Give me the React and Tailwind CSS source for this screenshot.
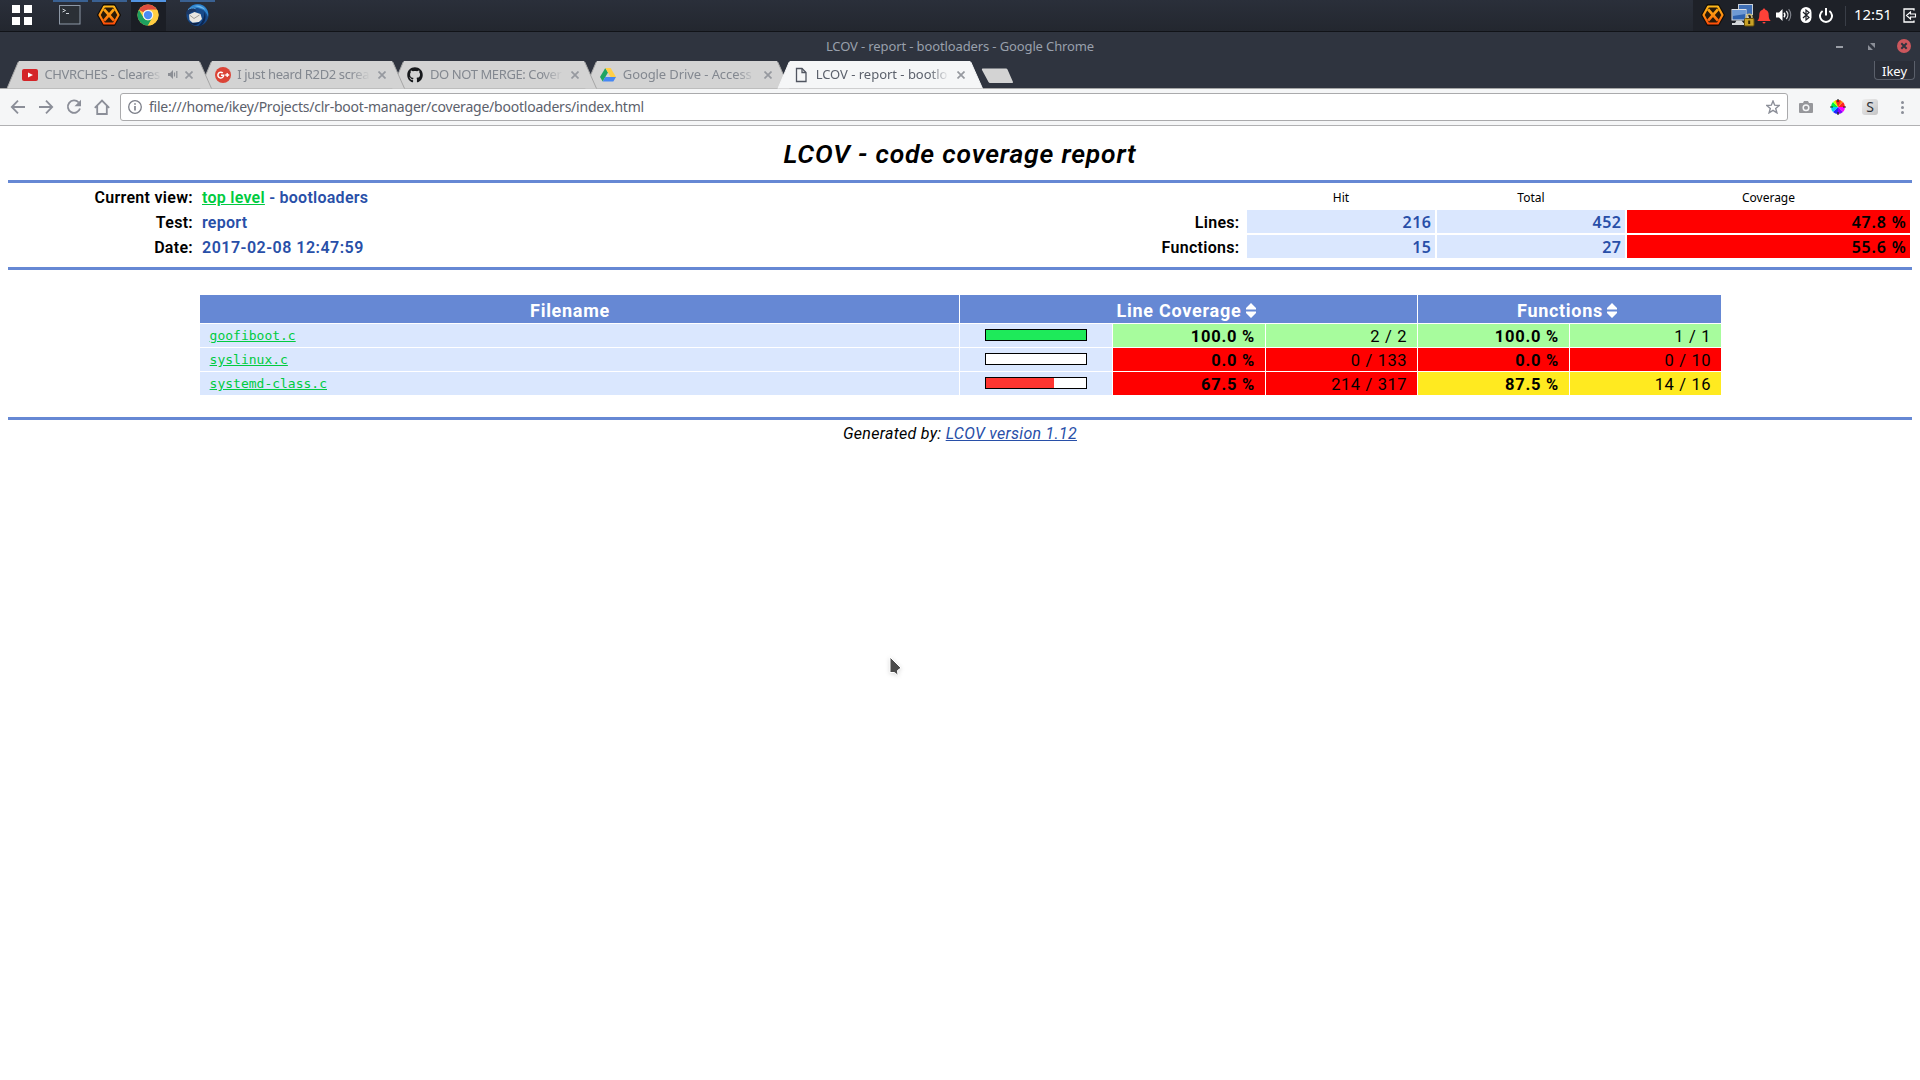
import React from "react";
import { FaGithub } from "react-icons/fa";

const UI = "font-['Noto_Sans',sans-serif]";

function OrangeX({ className }) {
  return (
    <svg viewBox="0 0 22 20" className={className}>
      <defs>
        <linearGradient id="fire" x1="0" y1="0" x2="0" y2="20" gradientUnits="userSpaceOnUse">
          <stop offset="0" stopColor="#ffc21a" />
          <stop offset="0.55" stopColor="#ff8a10" />
          <stop offset="1" stopColor="#ff3d06" />
        </linearGradient>
      </defs>
      <path d="M6.2 1h9.6l5.2 9-5.2 9H6.2L1 10z" fill="#2a1a08" stroke="#120d08" strokeWidth="2" strokeLinejoin="round" />
      <path d="M6.6 2.2h8.8l4.3 7.8-4.3 7.8H6.6L2.3 10z" fill="none" stroke="url(#fire)" strokeWidth="2" strokeLinejoin="round" />
      <path d="M6.5 4.8l9 10.4M15.5 4.8L6.500 15.200" stroke="url(#fire)" strokeWidth="2.500" />
    </svg>
  );
}

function ChromeLogo({ className }) {
  return (
    <svg viewBox="0 0 48 48" className={className}>
      <circle cx="24" cy="24" r="23" fill="#ffcd42" />
      <path d="M4.1 12.5A23 23 0 0 1 43.9 12.5H24A11.5 11.5 0 0 0 14 18.2z" fill="#de4d3f" />
      <path d="M4.1 12.5A23 23 0 0 0 24 47L34 29.7A11.5 11.5 0 0 1 14 29.7z" fill="#1da05f" />
      <path d="M43.9 12.5A23 23 0 0 1 24 47L34 29.7A11.5 11.5 0 0 0 24 12.5z" fill="#ffcd42" />
      <circle cx="24" cy="24" r="11.5" fill="#f4f4f4" />
      <circle cx="24" cy="24" r="9" fill="#4c8bf5" />
    </svg>
  );
}

function Thunderbird({ className }) {
  return (
    <svg viewBox="0 0 24 24" className={className}>
      <circle cx="12.500" cy="12" r="11" fill="#174a8a" />
      <path d="M4 5.500C7 1.500 13 0 18 2.500c4 2.500 6 7 5 11.500-1-4-3.500-7-7-8-4-1.500-8-1.500-12-.5z" fill="#2f86cf" />
      <path d="M9 3c4-1.500 9 0 11.500 4-3-2-7-3-11.500-4z" fill="#6fb6ea" />
      <path d="M19.500 9c2 5 1 10-3 13.500-1 .4-2 .5-3 .5C17.500 19 19.500 14.500 19.500 9z" fill="#0c2854" />
      <path d="M4 11.500L9.500 9l6 2 1.500 5-3 3-6.500.8L4.500 17z" fill="#e9e7e1" />
      <path d="M4.500 12l4.500 3.500 5.500-3.500" fill="none" stroke="#96938c" strokeWidth="0.9" />
      <path d="M1 10C1.500 6.500 5 4.500 9 5.500l3 3C8 8 5 9 3.500 12z" fill="#1b3763" />
      <path d="M3 6.500C5 5 8 4.500 10.500 5.500" fill="none" stroke="#58a5e0" strokeWidth="1" />
      <path d="M4 18.500c3 2 8 2 11 0-1 4-8 5-11 0z" fill="#0d2348" />
    </svg>
  );
}

function Terminal() {
  return (
    <svg viewBox="0 0 22 20" className="h-5 w-[22px]">
      <rect x="0.5" y="0.5" width="20.500" height="18.500" fill="#2b3036" stroke="#8d98a6" />
      <path d="M3.500 4l3 1.500-3 1.500" fill="none" stroke="#cdd3d8" strokeWidth="1" />
      <path d="M7 8.500h3" stroke="#cdd3d8" />
    </svg>
  );
}

function Launcher({ active, className = "", children }) {
  return (
    <div className={`flex h-[31px] w-[35px] justify-center border-t-2 ${active ? "border-[#5294e2] bg-[#1b1e25]" : "border-[#3a6192]"} ${className}`}>
      <div className="-ml-[2px]">{children}</div>
    </div>
  );
}

function NetworkIcon() {
  return (
    <svg viewBox="0 0 24 23" className="ml-[6px] h-[23px] w-6">
      <rect x="7.500" y="0.5" width="14" height="10" fill="#3f6fb5" stroke="#c9d0d8" />
      <path d="M12 11h5l1 3h-7z" fill="#d9dce0" />
      <rect x="1" y="5.500" width="14" height="10.500" fill="#2f62ad" stroke="#dde1e6" />
      <path d="M1.500 6h13v4L2 12z" fill="#6f9ad4" />
      <path d="M5.500 16.500h5l2 2.500h2v2H1v-2h3z" fill="#d4d7da" />
      <path d="M15.500 15v-2a2.700 2.700 0 0 1 5.400 0v2" fill="none" stroke="#c8b878" strokeWidth="1.600" />
      <rect x="13.500" y="14.500" width="9.500" height="7.500" rx="1" fill="#c9a227" stroke="#6b5208" />
      <path d="M18.200 16.500v3.500" stroke="#332600" strokeWidth="2" />
    </svg>
  );
}

function Panel() {
  return (
    <div className="flex h-[32px] border-b border-[#111318] bg-linear-to-b from-[#2a2f3a] to-[#23272f]">
      <div className="ml-3 mt-[5px] grid h-[20px] w-[20px] grid-cols-2 gap-[4px]">
        <span className="bg-white" />
        <span className="bg-white" />
        <span className="bg-white" />
        <span className="bg-white" />
      </div>
      <Launcher className="ml-[21px]">
        <div className="mt-[3px]"><Terminal /></div>
      </Launcher>
      <Launcher className="ml-1">
        <OrangeX className="mt-[2px] h-[22px] w-6" />
      </Launcher>
      <Launcher className="ml-1" active>
        <ChromeLogo className="mt-[2px] h-[22px] w-[22px]" />
      </Launcher>
      <Launcher className="ml-[14px]">
        <Thunderbird className="mt-[1px] h-6 w-6" />
      </Launcher>
      <div className="ml-auto flex h-[31px] w-[227px] items-center bg-[#1e2128]">
        <OrangeX className="-mt-px ml-[8px] h-[22px] w-6 shrink-0" />
        <NetworkIcon />
        <svg viewBox="0 0 14 16" className="ml-[2px] h-4 w-[14px]">
          <path d="M7 .5a1.300 1.300 0 0 1 1.300 1.300C11 2.500 11.700 4.500 11.700 7c0 3 .5 4.500 2 6H.3c1.500-1.500 2-3 2-6 0-2.500.7-4.500 3.400-5.200A1.300 1.300 0 0 1 7 .5zM5.500 14h3a1.500 1.500 0 0 1-3 0z" fill="#fc4138" />
        </svg>
        <svg viewBox="0 0 16 14" className="-mt-px ml-[5px] h-[14px] w-4">
          <path d="M0 4.500h3L6.500 1v12L3 9.500H0z" fill="#fff" />
          <path d="M8 4.800a3.500 3.500 0 0 1 0 4.400" fill="none" stroke="#fff" strokeWidth="1.400" />
          <path d="M10.300 3a6 6 0 0 1 0 8" fill="none" stroke="#d5d6d8" strokeWidth="1.300" />
          <path d="M12.600 1.200a9 9 0 0 1 0 11.600" fill="none" stroke="#7d8088" strokeWidth="1.200" />
        </svg>
        <svg viewBox="0 0 12 16" className="-mt-px ml-[8px] h-4 w-3">
          <rect x="0.500" y="0" width="11" height="16" rx="5.500" fill="#fff" />
          <path d="M3 5l6 5.500L6 13V3l3 2.500L3 11" fill="none" stroke="#1e2128" strokeWidth="1.200" />
        </svg>
        <svg viewBox="0 0 14 15" className="-mt-px ml-[7px] h-[15px] w-[14px]">
          <path d="M3.600 3A6 6 0 1 0 10.400 3M7 0v7.500" fill="none" stroke="#fff" strokeWidth="2" />
        </svg>
        <div className="ml-[12px] h-[20px] w-px bg-[#3a3e47]" />
        <div className={`${UI} ml-[8px] w-[40px] pb-[2px] text-[15px] leading-[27px] tracking-[-0.1px] text-white`}>12:51</div>
        <svg viewBox="0 0 15 15" className="-mt-px ml-[9px] h-[15px] w-[15px]">
          <path d="M11 2.500V1H1v13h10v-1.500" fill="none" stroke="#fff" strokeWidth="1.300" />
          <path d="M3.500 7.500L7.500 4v2H12.500v3H7.500v2z" fill="none" stroke="#fff" strokeWidth="1.100" />
        </svg>
      </div>
    </div>
  );
}

function TitleBar() {
  return (
    <div className="grid h-[29px] grid-cols-[1fr_auto_1fr] bg-[#2f343f]">
      <div className="col-start-2">
        <div className={`${UI} pt-px text-[13px] leading-[27px] tracking-[-0.12px] text-[#99a0ac]`}>
          LCOV - report - bootloaders - Google Chrome
        </div>
      </div>
      <div className="flex h-[28px] items-center justify-end pr-[9px]">
        <div className="mt-px h-[2px] w-[7px] bg-[#9a9ea6]" />
        <svg viewBox="0 0 7 7" className="ml-[25px] h-[7px] w-[7px]">
          <path d="M2 0h5v5zM0 2v5h5z" fill="#8b8f98" />
        </svg>
        <svg viewBox="0 0 14 14" className="ml-[22px] h-[14px] w-[14px]">
          <circle cx="7" cy="7" r="7" fill="#cc575d" />
          <path d="M4.300 4.300l5.400 5.400M9.700 4.300L4.300 9.700" stroke="#2f343f" strokeWidth="2" />
        </svg>
      </div>
    </div>
  );
}

const YouTube = (
  <svg viewBox="0 0 16 16" className="h-4 w-4">
    <rect x="0" y="2" width="16" height="12" rx="2" fill="#d42428" />
    <path d="M6 5.400l5 2.600-5 2.600z" fill="#fff" />
  </svg>
);
const GPlus = (
  <svg viewBox="0 0 16 16" className="h-4 w-4">
    <circle cx="8" cy="8" r="8" fill="#db4437" />
    <path d="M7.800 6A2.900 2.900 0 1 0 8.700 8.300H6" fill="none" stroke="#fff" strokeWidth="1.500" />
    <path d="M12.200 6v4M10.200 8h4" stroke="#fff" strokeWidth="1.300" />
  </svg>
);
const Drive = (
  <svg viewBox="0 0 16 16" className="h-4 w-4">
    <path d="M5.300 1L0 10l2.700 4.600L8 5.600z" fill="#1fa463" />
    <path d="M5.300 1h5.400L16 10h-5.400z" fill="#ffcf48" />
    <path d="M2.700 14.600L5.300 10H16l-2.700 4.600z" fill="#4687f4" />
  </svg>
);
const Page = (
  <svg viewBox="0 0 16 16" className="h-4 w-4">
    <path d="M3.500 1.500h5.500l4 4v9h-9.500z" fill="none" stroke="#505560" strokeWidth="1.300" />
    <path d="M9 1.500v4h4" fill="none" stroke="#505560" strokeWidth="1.300" />
  </svg>
);

const TABS = [
  { icon: YouTube, title: "CHVRCHES - Cleares", audio: true, track: "tracking-[-0.35px]", z: "z-40" },
  { icon: GPlus, title: "I just heard R2D2 screa", track: "tracking-[-0.38px]", z: "z-30" },
  { icon: <FaGithub className="h-4 w-4 text-[#17191c]" />, title: "DO NOT MERGE: Cover", track: "tracking-[-0.4px]", z: "z-20" },
  { icon: Drive, title: "Google Drive - Access", track: "tracking-[-0.1px]", z: "z-10" },
  { icon: Page, title: "LCOV - report - bootlo", active: true, track: "tracking-[-0.02px]", z: "z-50" },
];

function Tab({ icon, title, audio, active, track, z }) {
  return (
    <div className={`relative -mr-[11.7px] h-[28px] w-[204.5px] shrink-0 ${z}`}>
      <svg viewBox="0 0 204.5 28" className="absolute inset-0 h-full w-full overflow-visible">
        <path
          d="M0 27.500L11 1.500Q11.500 .5 12.500 .5H191.500Q192.500 .5 193 1.500L204.500 27.500"
          fill={active ? "#f5f6f7" : "#d3d3d3"}
          stroke={active ? "#f5f6f7" : "#a6a6a6"}
          strokeWidth="1"
        />
        <path d="M12 .5H192" stroke={active ? "#f5f6f7" : "#d3d3d3"} strokeWidth="1" />
      </svg>
      <div className="relative flex h-[27px] items-center pl-[15px]">
        {icon}
        <div
          className={`${UI} ml-[6.700px] overflow-hidden whitespace-nowrap text-[13px] leading-[27px] mask-r-from-85% ${track} ${
            audio ? "w-[118px]" : "w-[133px]"
          } ${active ? "text-[#5c616c]" : "text-[#838890]"}`}
        >
          {title}
        </div>
        {audio && (
          <svg viewBox="0 0 10 9" className="ml-[6px] h-[9px] w-[10px]">
            <path d="M0 3h2l3-3v9L2 6H0z" fill="#8b8e94" />
            <path d="M6.500 2.500v4M8.800 1v7" stroke="#8b8e94" strokeWidth="1.200" />
          </svg>
        )}
        <svg viewBox="0 0 8 8" className={`${audio ? "ml-[7px]" : "ml-[8px]"} h-2 w-2`}>
          <path d="M.5 .5l7 7M7.500 .5l-7 7" stroke="#96999f" strokeWidth="1.700" />
        </svg>
      </div>
    </div>
  );
}

function TabStrip() {
  return (
    <div className="flex h-[27px] bg-[#2f343f] pl-[6.700px]">
      {TABS.map((t) => (
        <Tab key={t.title} {...t} />
      ))}
      <svg viewBox="0 0 33 16" className="ml-[10.500px] mt-[6.500px] h-4 w-[33px]">
        <path d="M1.500 .5H25q1 0 1.500 1L32 14q.4 1-1 1H9q-1 0-1.500-1L1 2Q.5 .5 1.500 .5z" fill="#d3d3d3" />
      </svg>
      <div className={`${UI} ml-auto mr-[5px] h-[19px] w-[41px] rounded-b-[4px] border border-t-0 border-[#5b606b] bg-[#2a2e38] pt-px text-center text-[13px] leading-[18px] text-white`}>
        Ikey
      </div>
    </div>
  );
}

function Toolbar() {
  return (
    <div className="flex h-[38px] items-center border-b border-t border-b-[#b1b1b3] border-t-[#a6a6a6] bg-[#f5f6f7]">
      <svg viewBox="0 0 16 16" className="ml-[10px] h-4 w-4" fill="none" stroke="#8b8e98" strokeWidth="1.800">
        <path d="M15 8H2M8 1.700L1.800 8 8 14.300" />
      </svg>
      <svg viewBox="0 0 16 16" className="ml-3 h-4 w-4" fill="none" stroke="#8b8e98" strokeWidth="1.800">
        <path d="M1 8h13M8 1.700L14.200 8 8 14.300" />
      </svg>
      <svg viewBox="0 0 16 16" className="ml-3 h-4 w-4" fill="none" stroke="#8b8e98" strokeWidth="1.800">
        <path d="M12.700 3.500A6.200 6.200 0 1 0 14 9.500" />
        <path d="M15 .8v6.500H8.500z" fill="#8b8e98" stroke="none" />
      </svg>
      <svg viewBox="0 0 16 16" className="ml-3 h-4 w-4" fill="none" stroke="#8b8e98" strokeWidth="1.800">
        <path d="M.8 8.800L8 1.500l7.200 7.300M3.200 7v8h9.600V7" />
      </svg>
      <div className="ml-[10px] flex h-[28px] w-[1668px] items-center rounded-[3px] border border-[#aaaaac] bg-white">
        <svg viewBox="0 0 14 14" className="ml-[7px] h-[14px] w-[14px]">
          <circle cx="7" cy="7" r="6.300" fill="none" stroke="#7b7e88" strokeWidth="1.300" />
          <path d="M7 6v4.500M7 3.200v1.600" stroke="#7b7e88" strokeWidth="1.600" />
        </svg>
        <div className={`${UI} ml-[7px] text-[14px] leading-[24px] tracking-[-0.225px] text-[#5c616c]`}>
          file:///home/ikey/Projects/clr-boot-manager/coverage/bootloaders/index.html
        </div>
        <svg viewBox="0 0 14 14" className="ml-auto mr-[7px] h-[14px] w-[14px]">
          <path d="M7 1l1.700 4.200 4.500.3-3.500 2.900 1.200 4.400L7 10.300l-3.900 2.500 1.200-4.400L.8 5.500l4.500-.3z" fill="none" stroke="#8b8e98" strokeWidth="1.400" />
        </svg>
      </div>
      <svg viewBox="0 0 14 12" className="ml-[11px] h-3 w-[14px]">
        <path d="M1 2h3l1-2h4l1 2h3q1 0 1 1v8q0 1-1 1H1q-1 0-1-1V3q0-1 1-1z" fill="#96979b" />
        <circle cx="7" cy="6.800" r="2.800" fill="none" stroke="#f5f6f7" strokeWidth="1.500" />
      </svg>
      <svg viewBox="-8 -8 16 16" className="ml-[17px] h-4 w-4">
        <path d="M0 0V-7A7 7 0 0 1 5 -5z" fill="#f80" />
        <path d="M0 0L5 -5A7 7 0 0 1 7 0z" fill="#ff2020" />
        <path d="M0 0H7A7 7 0 0 1 5 5z" fill="#f0f" />
        <path d="M0 0L5 5A7 7 0 0 1 0 7z" fill="#80f" />
        <path d="M0 0V7A7 7 0 0 1 -5 5z" fill="#22f" />
        <path d="M0 0L-5 5A7 7 0 0 1 -7 0z" fill="#0cf" />
        <path d="M0 0H-7A7 7 0 0 1 -5 -5z" fill="#0e4" />
        <path d="M0 0L-5 -5A7 7 0 0 1 0 -7z" fill="#cf0" />
        <path d="M0 0L-2.500 -6.500A7 7 0 0 1 3 -6.300z" fill="#f22" />
        <path d="M0-8v3M0 8v-3M-8 0h3M8 0h-3" stroke="#222" strokeWidth="1.200" />
      </svg>
      <div className={`${UI} ml-4 h-4 w-4 rounded-[3px] bg-linear-to-br from-[#efefef] to-[#c4c4c5] text-center text-[14px] leading-[15px] text-[#2b2e34]`}>S</div>
      <div className="ml-[22.500px] grid gap-[2px]">
        <span className="h-[3px] w-[3px] rounded-full bg-[#8b8e98]" />
        <span className="h-[3px] w-[3px] rounded-full bg-[#8b8e98]" />
        <span className="h-[3px] w-[3px] rounded-full bg-[#8b8e98]" />
      </div>
    </div>
  );
}

const Rule = () => <div className="h-[3px] bg-[#6688d4]" />;

function Label({ children }) {
  return <div className="pt-px text-right font-semibold tracking-[0.3px] text-black">{children}</div>;
}

function Value({ children }) {
  return <div className="pl-[7px] pt-px font-semibold tracking-[0.26px] text-[#284fa8]">{children}</div>;
}

function Num({ children }) {
  return <div className={`${UI} bg-[#dae7fe] pr-[3.500px] pt-px text-right font-semibold leading-[22px] tracking-[0.5px] text-[#284fa8]`}>{children}</div>;
}

function Pct({ children }) {
  return <div className={`${UI} bg-[#ff0000] pr-[3.500px] pt-px text-right font-semibold leading-[22px] tracking-[0.8px] text-black`}>{children}</div>;
}

function Head({ children }) {
  return <div className={`${UI} pt-px text-center text-[12px] text-black`}>{children}</div>;
}

function Summary() {
  return (
    <div className="grid h-[84px] grid-cols-[185px_905px_143px_188px_188px_283px] grid-rows-[23px_23px_23px] gap-[2px] pt-[2px] text-[16px] leading-[23px]">
      <Label>Current view:</Label>
      <Value>
        <span className="text-[#00cb40] underline">top level</span> - bootloaders
      </Value>
      <div />
      <Head>Hit</Head>
      <Head>Total</Head>
      <Head>Coverage</Head>
      <Label>Test:</Label>
      <Value>report</Value>
      <div className="pr-[5.500px]"><Label>Lines:</Label></div>
      <Num>216</Num>
      <Num>452</Num>
      <Pct>47.8 %</Pct>
      <Label>Date:</Label>
      <Value><span className="tracking-[0.5px]">2017-02-08 12:47:59</span></Value>
      <div className="pr-[5.500px]"><Label>Functions:</Label></div>
      <Num>15</Num>
      <Num>27</Num>
      <Pct>55.6 %</Pct>
    </div>
  );
}

function SortIcon() {
  return (
    <svg viewBox="0 0 10 15" className="h-[15px] w-[10px]">
      <path d="M5 0L10 5V6.500H0V5zM5 15L10 10V8.500H0V10z" fill="#fff" />
    </svg>
  );
}

const TONES = { hi: "bg-[#a7fc9d]", med: "bg-[#ffea20]", lo: "bg-[#ff0000]" };

const FILES = [
  { name: "goofiboot.c", line: "100.0 %", lines: "2 / 2", tone: "hi", fn: "100.0 %", fns: "1 / 1", fnTone: "hi", bar: "bg-[#1eea5a]", pct: 100 },
  { name: "syslinux.c", line: "0.0 %", lines: "0 / 133", tone: "lo", fn: "0.0 %", fns: "0 / 10", fnTone: "lo", bar: "bg-white", pct: 0 },
  { name: "systemd-class.c", line: "67.5 %", lines: "214 / 317", tone: "lo", fn: "87.5 %", fns: "14 / 16", fnTone: "med", bar: "bg-[#ff3530]", pct: 68 },
];

function Cell({ tone, bold, children }) {
  return (
    <div className={`${TONES[tone]} pr-[10px] pt-px text-right ${bold ? "font-bold tracking-[0.75px]" : "tracking-[0.45px] [word-spacing:0.5px]"}`}>{children}</div>
  );
}

function FileTable() {
  return (
    <div className="ml-[192px] grid w-[1521px] grid-cols-[759px_152px_152px_151px_151px_151px] grid-rows-[28px_23px_23px_23px] gap-px text-[16.500px] leading-[23px] text-black">
      <div className="bg-[#6688d4] pr-[19px] pt-[3px] text-center text-[18px] font-bold leading-[25px] tracking-[0.7px] text-white">
        Filename
      </div>
      <div className="col-span-3 flex items-center justify-center gap-1 bg-[#6688d4] pr-[5px] pt-[3px] text-[18px] font-bold tracking-[0.75px] text-white">
        Line Coverage <SortIcon />
      </div>
      <div className="col-span-2 flex items-center justify-center gap-1 bg-[#6688d4] pr-[5px] pt-[3px] text-[18px] font-bold tracking-[0.7px] text-white">
        Functions <SortIcon />
      </div>
      {FILES.map((f) => (
        <React.Fragment key={f.name}>
          <div className="bg-[#dae7fe] pl-[9.600px] font-['DejaVu_Sans_Mono',monospace] text-[13px] leading-[23px] text-[#00cb40] underline">
            {f.name}
          </div>
          <div className="flex justify-center bg-[#dae7fe] pt-[5px]">
            <div className="h-3 w-[102px] border border-black bg-white">
              <div className={`h-full ${f.bar}`} style={{ width: `${f.pct}%` }} />
            </div>
          </div>
          <Cell tone={f.tone} bold>{f.line}</Cell>
          <Cell tone={f.tone}>{f.lines}</Cell>
          <Cell tone={f.fnTone} bold>{f.fn}</Cell>
          <Cell tone={f.fnTone}>{f.fns}</Cell>
        </React.Fragment>
      ))}
    </div>
  );
}

export default function App() {
  return (
    <div className="relative h-[1080px] w-[1920px] overflow-hidden bg-white">
      <Panel />
      <TitleBar />
      <TabStrip />
      <Toolbar />
      <main className="px-2 font-[Roboto,sans-serif]">
        <h1 className="h-[54px] pt-[13px] text-center text-[26.500px] font-semibold italic leading-[30px] tracking-[0.8px] text-black">
          LCOV - code coverage report
        </h1>
        <Rule />
        <Summary />
        <Rule />
        <div className="h-[25px]" />
        <FileTable />
        <div className="h-[22px]" />
        <Rule />
        <p className="pt-[2px] text-center text-[16px] italic leading-[23px] tracking-[0.28px] text-black">
          Generated by: <span className="text-[#284fa8] underline">LCOV version 1.12</span>
        </p>
      </main>
      <svg viewBox="0 0 16 24" className="absolute left-[888px] top-[654.500px] h-6 w-4 drop-shadow-sm">
        <path d="M2 2L13 13 9.500 15.500 10 20.500 6.500 17.500 2 17.500z" fill="#4a4a4a" stroke="#fff" strokeWidth="1" />
      </svg>
    </div>
  );
}
